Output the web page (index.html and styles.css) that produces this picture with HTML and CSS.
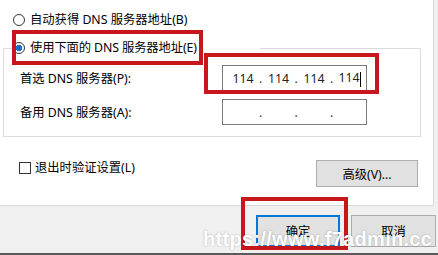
FILE: index.html
```html
<!DOCTYPE html>
<html lang="zh-CN">
<head>
  <meta charset="UTF-8">
  <meta name="viewport" content="width=device-width, initial-scale=1.0">
  <title>DNS 服务器设置</title>
  <link rel="stylesheet" href="styles.css">
</head>
<body>

<div class="dialog">
  <div class="panel">
    <label class="choice choice-first">
      <span class="radio"></span>
      <span>自动获得 DNS 服务器地址(B)</span>
    </label>

    <fieldset class="group">
      <legend class="group-title">
        <span class="choice">
          <span class="radio checked"></span>
          <span>使用下面的 DNS 服务器地址(E)</span>
        </span>
      </legend>
      <div class="group-body">
        <div class="field-row">
          <span class="field-label">首选 DNS 服务器(P):</span>
          <div class="ip-box">
            <span class="octet">114</span><span class="dot">.</span><span class="octet">114</span><span class="dot">.</span><span class="octet">114</span><span class="dot">.</span><span class="octet">114<span class="caret"></span></span>
          </div>
        </div>
        <div class="field-row">
          <span class="field-label">备用 DNS 服务器(A):</span>
          <div class="ip-box">
            <span class="octet"></span><span class="dot">.</span><span class="octet"></span><span class="dot">.</span><span class="octet"></span><span class="dot">.</span><span class="octet"></span>
          </div>
        </div>
      </div>
    </fieldset>

    <div class="options">
      <label class="check-row">
        <span class="checkbox"></span>
        <span>退出时验证设置(L)</span>
      </label>
      <button class="btn btn-advanced">高级(V)...</button>
    </div>
  </div>

  <div class="footer">
    <button class="btn btn-ok">确定</button>
    <button class="btn btn-cancel">取消</button>
  </div>

  <div class="mark mark-radio"></div>
  <div class="mark mark-ip"></div>
  <div class="mark mark-ok"></div>

  <div class="watermark">https://www.f7admin.cc</div>
</div>

</body>
</html>
```

FILE: styles.css
```css
body {
  margin: 0;
  font-family: "Noto Sans", "Noto Sans CJK SC", sans-serif;
  font-size: 12.3px;
  color: #000000;
}
.dialog {
  position: relative;
  width: 438px;
  height: 255px;
  box-sizing: border-box;
  background-color: #f0f0f0;
  border-bottom: 2px solid #5a5a5a;
  overflow: hidden;
}
.panel {
  width: 434px;
  height: 206px;
  box-sizing: border-box;
  padding-top: 12px;
  background-color: #ffffff;
  border-right: 1px solid #d9d9d9;
  border-bottom: 1px solid #d9d9d9;
}
.choice {
  display: flex;
  align-items: center;
  gap: 5px;
  height: 16px;
  line-height: 16px;
  white-space: nowrap;
}
.choice-first {
  margin-left: 13px;
}
.radio {
  width: 12px;
  height: 12px;
  box-sizing: border-box;
  border: 1px solid #333333;
  border-radius: 50%;
  background-color: #ffffff;
  flex: none;
}
.radio.checked {
  background: radial-gradient(circle, #1d6fc6 0 3px, #ffffff 3.6px);
}
.group {
  width: 418px;
  box-sizing: border-box;
  margin: 12px 0 0 3px;
  padding: 0;
  border: 1px solid #dcdcdc;
  min-inline-size: auto;
}
.group-title {
  width: 248px;
  box-sizing: border-box;
  margin-left: 8px;
  padding: 0 0 0 1px;
  background-color: #ffffff;
  letter-spacing: -0.1px;
}
.group-body {
  padding: 9px 0 11px 16px;
}
.field-row {
  display: flex;
  align-items: center;
  height: 26px;
}
.field-row + .field-row {
  margin-top: 8px;
}
.field-label {
  width: 202px;
  white-space: nowrap;
}
.ip-box {
  display: flex;
  align-items: center;
  width: 145px;
  height: 26px;
  box-sizing: border-box;
  padding-left: 6.5px;
  border: 1px solid #7a7a7a;
  background-color: #ffffff;
}
.octet {
  width: 27px;
  text-align: center;
  white-space: nowrap;
  color: #222222;
}
.dot {
  width: 8.5px;
  text-align: center;
  color: #333333;
}
.caret {
  display: inline-block;
  width: 0;
  height: 15px;
  border-left: 1px solid #000000;
  vertical-align: middle;
}
.options {
  display: flex;
  align-items: flex-start;
  margin-top: 23px;
  padding: 0 15px 0 19px;
}
.check-row {
  display: flex;
  align-items: center;
  gap: 4px;
  height: 16px;
  line-height: 16px;
}
.checkbox {
  width: 12px;
  height: 12px;
  box-sizing: border-box;
  border: 1px solid #333333;
  background-color: #ffffff;
}
.btn {
  box-sizing: border-box;
  padding: 0;
  font-family: inherit;
  font-size: 12.3px;
  color: #000000;
  background-color: #e1e1e1;
  border: 1px solid #adadad;
}
.btn-advanced {
  margin-left: auto;
  width: 102px;
  height: 27px;
}
.footer {
  display: flex;
  justify-content: flex-end;
  gap: 11px;
  padding: 9px 2px 0 0;
}
.btn-ok {
  width: 84px;
  height: 32px;
  border: 2px solid #0078d7;
}
.btn-cancel {
  width: 85px;
  height: 32px;
}
.mark {
  position: absolute;
  box-sizing: border-box;
  border: 4px solid #c8161d;
}
.mark-radio {
  left: 12px;
  top: 30px;
  width: 191px;
  height: 35px;
}
.mark-ip {
  left: 204px;
  top: 53px;
  width: 175px;
  height: 41px;
}
.mark-ok {
  left: 241px;
  top: 197px;
  width: 107px;
  height: 53px;
}
.watermark {
  position: absolute;
  left: 203px;
  top: 228px;
  font-family: "Liberation Sans", sans-serif;
  font-size: 20px;
  font-weight: bold;
  letter-spacing: 0.3px;
  color: #ffffff;
  text-shadow: 0 0 2px rgba(0, 0, 0, 0.3);
  white-space: nowrap;
}
```
